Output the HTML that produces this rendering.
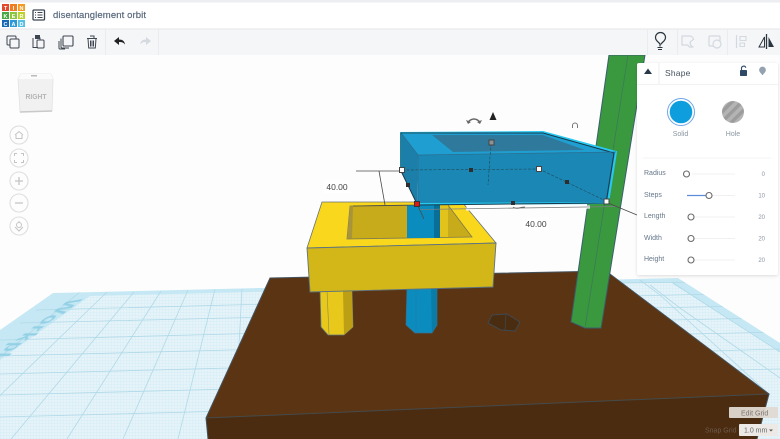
<!DOCTYPE html>
<html><head><meta charset="utf-8"><title>disentanglement orbit</title>
<style>
html,body{margin:0;padding:0;width:780px;height:439px;overflow:hidden;background:#fdfdfd}
svg{display:block}
text{font-family:"Liberation Sans",sans-serif}
</style></head><body>
<svg xmlns="http://www.w3.org/2000/svg" width="780" height="439" viewBox="0 0 780 439">
<defs>
<pattern id="fine" width="3" height="3" patternUnits="userSpaceOnUse"><rect width="3" height="3" fill="#e6f4f9"/><path d="M0 .5H3M.5 0V3" stroke="#d6ecf5" stroke-width=".5"/></pattern>
<pattern id="st" width="7" height="7" patternUnits="userSpaceOnUse" patternTransform="rotate(-45)"><rect width="7" height="7" fill="#b4b4b4"/><rect width="7" height="3.4" fill="#9c9c9c"/></pattern>
<filter id="sh" x="-5%" y="-5%" width="110%" height="110%"><feDropShadow dx="0" dy="1" stdDeviation="1.5" flood-color="#000" flood-opacity=".13"/></filter>
<filter id="b"><feGaussianBlur stdDeviation=".4"/></filter>
<clipPath id="wp"><polygon points="53,293 678,278 780,343 780,439 0,439 0,330"/></clipPath>
</defs>
<rect width="780" height="439" fill="#fdfdfd"/>

<!-- workplane -->
<polygon points="53,293 678,278 780,343 780,439 0,439 0,330" fill="url(#fine)"/>
<g clip-path="url(#wp)">
<polygon points="53,293 678,278 780,343 780,352 670,282 90,296 0,360 0,330" fill="#c6e8f4"/>
<g stroke="#b0d9e8" stroke-width=".8" fill="none">
<path d="M20,323L270,317M0,340L270,333M0,356L270,349M0,374L270,367M0,395L270,388M0,417L270,410M36,310L270,304"/>
<path d="M80,292L-101,439M107,292L-45,439M134,292L11,439M161,291L67,439M188,290L123,439M215,289L178,439M242,289L234,439"/>
<path d="M620,283L700,282M630,296L720,294M650,308L745,306M670,320L770,318M690,334L780,332M710,351L780,349M735,370L780,369"/>
<path d="M650,285L680,308L743,352L780,378M673,283L710,307L780,352M640,280L660,295L770,395"/>
</g>
<text transform="matrix(-1.05,.8,-.9,0,70,299)" font-size="20" font-weight="bold" letter-spacing="1" fill="#93d0e5" filter="url(#b)">Workplane</text>
</g>

<!-- brown base -->
<polygon points="270,278 606,271 769,394 206,418" fill="#5b3513"/>
<polygon points="206,418 769,394 757,439 208,439" fill="#4b2c10"/>
<path d="M206,418L769,394" stroke="#444a4c" stroke-width="1" fill="none"/>
<path d="M208,439L206,418L270,278L606,271L769,394L757,439" stroke="#44525e" stroke-width="1" fill="none"/>

<!-- hex hole -->
<polygon points="488,323 492,315 507,314 520,322 515,331 501,330" fill="#4a2c10" stroke="#3f4a55" stroke-width=".9"/>
<path d="M506,315L505,330" stroke="#3f4a55" stroke-width=".7"/>

<!-- green bar -->
<polygon points="609,55 645,55 601,328 585,328 571,322" fill="#3a993f" stroke="#3b5f6e" stroke-width="1"/>
<path d="M628,55L585,328" stroke="#3a7a55" stroke-width=".8"/>

<!-- blue pillar lower -->
<polygon points="407,285 437,285 437,325 432,333 415,333 406,325" fill="#0b8cbe" stroke="#3a6f8c" stroke-width=".7"/>
<polygon points="431,285 437,285 437,325 432,333" fill="#0a7ca8"/>
<path d="M416,288V333" stroke="#2c79a0" stroke-width=".6"/>

<!-- yellow pillar -->
<polygon points="320,290 352,290 353,327 344,335 328,335 321,327" fill="#e8c81b" stroke="#5d7380" stroke-width=".8"/>
<polygon points="343,290 352,290 353,327 344,335" fill="#bc9f14"/>
<path d="M327,290L329,335" stroke="#8c8a50" stroke-width=".6"/>

<!-- yellow block -->
<polygon points="322,202 462,202 496,243 307,248" fill="#f9d71c" stroke="#66727a" stroke-width=".8"/>
<polygon points="350,206 448,205 472,237 347,239" fill="#c8ab1a" stroke="#7c7a50" stroke-width=".8"/>
<polygon points="350,206 347,239 352,238 353,207" fill="#a8943a"/>
<polygon points="407,205 440,205 440,238 407,238" fill="#0b8cbe"/>
<polygon points="434,205 440,205 440,238 434,238" fill="#0a6f98"/>
<polygon points="440,205 448,205 448,237 440,237" fill="#e2c31c"/>
<polygon points="307,248 496,243 493,287 310,292" fill="#d3b618" stroke="#5d7380" stroke-width=".9"/>

<!-- white line under box -->
<path d="M466,209L590,207" stroke="#fff" stroke-width="3"/>
<path d="M420,209.500L618,206.500" stroke="#7e8080" stroke-width=".8"/>

<!-- blue box -->
<polygon points="401,133 418,155 417,204 401,171" fill="#1c7fa9"/>
<polygon points="401,133 543,132 616,152 418,155" fill="#1f9fd1"/>
<polygon points="432,135 543,135 585,150 453,152" fill="#2f7a9c"/>
<polygon points="418,155 616,152 608,203 417,204" fill="#1b87b4"/>
<path d="M401,171V133L543,132L616,152L608,203L417,204" fill="none" stroke="#28c8f0" stroke-width="2"/>
<path d="M401,171V133L543,133L614,153L606,203L417,205" fill="none" stroke="#17384a" stroke-width="1"/>
<path d="M402,134L418,155L616,152M418,155V204" fill="none" stroke="#2a6f90" stroke-width=".7"/>
<path d="M401,171L417,204" stroke="#17384a" stroke-width="1"/>

<!-- dashed / dims -->
<path d="M402,170L539,169M491,143L488,185M539,169L606,201" stroke="#22495c" stroke-width=".6" stroke-dasharray="3 1.500" fill="none"/>
<path d="M356,171L401,171M379,171L385,205M353,206L417,205M417,204L424,219M608,203L637,215" stroke="#4a4a4a" stroke-width=".8" fill="none"/>
<path d="M513,207q3,2 6,1t6,-1" stroke="#555" stroke-width=".7" fill="none"/>

<!-- handles -->
<g fill="#2e2e2e"><rect x="469" y="168" width="4" height="4"/><rect x="406" y="183" width="4" height="4"/><rect x="565" y="180" width="4" height="4"/><rect x="511" y="201" width="4" height="4"/></g>
<g fill="#fff" stroke="#444" stroke-width="1"><rect x="399.500" y="167.500" width="5" height="5"/><rect x="536.500" y="166.500" width="5" height="5"/><rect x="604" y="199" width="5" height="5"/></g>
<rect x="489" y="140" width="5" height="5" fill="#8b9396" stroke="#444"/>
<rect x="414.500" y="201.500" width="5" height="5" fill="#e3170f" stroke="#333"/>

<!-- dim labels -->
<rect x="324" y="180" width="26" height="13" fill="#fff"/>
<text x="337" y="190" font-size="8.500" fill="#444" text-anchor="middle">40.00</text>
<rect x="523" y="217" width="26" height="13" fill="#fff"/>
<text x="536" y="227" font-size="8.500" fill="#444" text-anchor="middle">40.00</text>

<!-- rotate handles -->
<path d="M468,122q6,-6 12,0" fill="none" stroke="#666" stroke-width="1.300"/>
<path d="M466,120l2,4 3,-2zM482,120l-2,4 -3,-2z" fill="#666"/>
<polygon points="493,112 496.500,120 489.500,120" fill="#222"/>
<path d="M572.500,128v-2.500a2.500,2.500 0 0 1 5,0v2.500" fill="none" stroke="#777" stroke-width="1"/>

<!-- header -->
<rect width="780" height="29" fill="#fff"/>
<rect width="780" height="2.500" fill="#eceef1"/>
<rect y="29" width="780" height="26" fill="#f5f6f8"/>
<path d="M0,29H780" stroke="#e3e5e9" stroke-width="1"/>
<path d="M105.500,29V55M158.500,29V55M647.500,29V55M677.500,29V55M727.500,29V55" stroke="#eaecef"/>

<!-- logo -->
<g font-size="5.500" font-weight="bold" fill="#fff" text-anchor="middle">
<rect x="2" y="4" width="7" height="7" fill="#e5492d"/><text x="5.500" y="9.800">T</text>
<rect x="10" y="4" width="7" height="7" fill="#ef7d22"/><text x="13.500" y="9.800">I</text>
<rect x="18" y="4" width="7" height="7" fill="#f59b24"/><text x="21.500" y="9.800">N</text>
<rect x="2" y="12" width="7" height="7" fill="#4aa843"/><text x="5.500" y="17.800">K</text>
<rect x="10" y="12" width="7" height="7" fill="#8cc63f"/><text x="13.500" y="17.800">E</text>
<rect x="18" y="12" width="7" height="7" fill="#bcd231"/><text x="21.500" y="17.800">R</text>
<rect x="2" y="20" width="7" height="7" fill="#1668b5"/><text x="5.500" y="25.800">C</text>
<rect x="10" y="20" width="7" height="7" fill="#2c98d6"/><text x="13.500" y="25.800">A</text>
<rect x="18" y="20" width="7" height="7" fill="#55bfe6"/><text x="21.500" y="25.800">D</text>
</g>
<!-- list icon -->
<rect x="33" y="10" width="11.500" height="10" rx="1" fill="none" stroke="#3c4650" stroke-width="1.300"/>
<path d="M35,12.500h1M37.500,12.500h5M35,15h1M37.500,15h5M35,17.500h1M37.500,17.500h5" stroke="#3c4650" stroke-width="1.100"/>
<text x="53" y="18" font-size="9.500" fill="#5a6a7e" stroke="#5a6a7e" stroke-width=".2" textLength="93" lengthAdjust="spacing">disentanglement orbit</text>

<!-- toolbar icons -->
<g fill="none" stroke="#3e4750" stroke-width="1">
<rect x="7" y="36" width="9" height="9" rx="1"/><rect x="10" y="39" width="9" height="9" rx="1" fill="#f5f6f8"/>
<path d="M33,38v9.500h5M36,38h4v2"/><rect x="37" y="40" width="7" height="8" rx="1"/><rect x="35.500" y="35.500" width="4" height="3" fill="#3e4750"/>
<rect x="63" y="36" width="10" height="10" rx="1" stroke-width="1.100"/>
<path d="M61,38.500v8.500a1,1 0 0 0 1,1h7M59,41v7a1,1 0 0 0 1,1h5"/>
<path d="M87,38.500h10M88,38.500l.7,9.500h6.600l.7,-9.500M90,36h4v2.500M90.500,40.500v6M92,40.500v6M93.500,40.500v6"/>
</g>
<path d="M114,41l5,-4v2.500c3.500,0 5.500,1.500 6,5c-1.500,-2 -3,-2.500 -6,-2.500v3z" fill="#222"/>
<path d="M151,41l-5,-4v2.500c-3.500,0 -5.500,1.500 -6,5c1.500,-2 3,-2.500 6,-2.500v3z" fill="#d4dae0"/>

<!-- right toolbar -->
<g fill="none">
<path d="M660.500,47v-2c0,-2 -4.500,-3 -4.500,-7a5,5 0 0 1 10,0c0,4 -4.500,5 -4.500,7" stroke="#2c3640" stroke-width="1.200" transform="translate(-.500,-.500)"/>
<path d="M657.500,47.500h5M658,49.500h4" stroke="#2c3640" stroke-width="1.100"/>
<path d="M682,36h8a4,4 0 0 1 3.500,3.500l-3,2a4,4 0 0 0 3,5.500h-4l-2,-2h-5.500z" stroke="#d3d9df" stroke-width="1.200"/>
<rect x="709" y="36" width="11" height="10" rx="1" stroke="#d3d9df" stroke-width="1.200"/><circle cx="717" cy="44" r="4" stroke="#d3d9df" stroke-width="1.200" fill="#f5f6f8"/>
<path d="M736.500,35V48" stroke="#d3d9df" stroke-width="1.200"/>
<path d="M740,36.500h6v4h-6zM740,43h4.500v3.500h-4.500z" stroke="#d3d9df" stroke-width="1.100"/>
<path d="M766.500,34V49" stroke="#2c3640" stroke-width="1.300"/>
<path d="M764.500,37l-5.500,10h5.500z" stroke="#2c3640" stroke-width="1"/>
</g>
<path d="M768.500,37l5.500,10h-5.500z" fill="#2c3640"/>

<!-- view cube -->
<polygon points="18,79 21,74 51,74 53,79 52,111 20,112" fill="#f1f1f1" stroke="#e2e2e2" stroke-width=".8"/>
<polygon points="18,79 21,74 51,74 53,79" fill="#fbfbfb"/>
<path d="M20,112L52,111" stroke="#c9c9c9" stroke-width="1.500"/>
<text x="36" y="99" font-size="7.500" font-weight="bold" fill="#b5b5b5" text-anchor="middle" textLength="21" lengthAdjust="spacingAndGlyphs">RIGHT</text>
<rect x="31" y="75" width="6" height="1.500" fill="#bbb"/>

<!-- left controls -->
<g fill="#fdfdfd" stroke="#dedede" stroke-width="1.100">
<circle cx="19" cy="135" r="9"/><circle cx="19" cy="158" r="9"/><circle cx="19" cy="181" r="9"/><circle cx="19" cy="203" r="9"/><circle cx="19" cy="226" r="9"/>
</g>
<g fill="none" stroke="#c4c4c4" stroke-width="1">
<path d="M15,135l4,-3.500 4,3.500M16,135v3.500h6V135"/>
<path d="M14.500,156v-2.500h2.500M21,153.500h2.500V156M14.500,160v2.500h2.500M21,162.500h2.500V160"/>
<path d="M15,181h8M19,177v8M15,203h8" stroke-width="1.300"/>
<circle cx="19" cy="225" r="2.500"/><path d="M15,227l4,4 4,-4M19,221v2"/>
</g>

<!-- panel -->
<rect x="637" y="63" width="141" height="212" rx="2" fill="#fff" filter="url(#sh)"/>
<rect x="658" y="63" width="2" height="21" fill="#f5f6f8"/>
<rect x="637" y="84" width="141" height="1" fill="#f1f2f4"/>
<polygon points="648,68.500 652,74 644,74" fill="#28384a"/>
<text x="665" y="76" font-size="8.500" fill="#45525f" letter-spacing=".2">Shape</text>
<rect x="740" y="70" width="7" height="6" rx=".8" fill="#2f4a66"/>
<path d="M741.500,70v-1.500a2.200,2.200 0 0 1 4.300,-.8" fill="none" stroke="#2f4a66" stroke-width="1.100"/>
<path d="M762.500,75c0,-1.500 -3,-2.500 -3,-5a3,3 0 0 1 6,0c0,2.500 -3,3.500 -3,5z" fill="#93a2ae" stroke="#93a2ae" stroke-width=".8"/>
<circle cx="681" cy="112" r="13.500" fill="#fff" stroke="#6ea6ea" stroke-width="1"/>
<circle cx="681" cy="112" r="11.300" fill="#0f9edd"/>
<circle cx="733" cy="112" r="11" fill="url(#st)"/>
<text x="680.500" y="136" font-size="7" fill="#8a96a1" text-anchor="middle">Solid</text>
<text x="733" y="136" font-size="7" fill="#8a96a1" text-anchor="middle">Hole</text>
<path d="M643,158H771" stroke="#f3f3f3"/>
<g font-size="7" fill="#66778a">
<text x="644" y="175">Radius</text><text x="644" y="197">Steps</text><text x="644" y="218">Length</text><text x="644" y="240">Width</text><text x="644" y="261">Height</text>
</g>
<g stroke="#f0f0f0" stroke-width="1"><path d="M692,174H735M692,195.500H735M692,217H735M692,238.500H735M692,260H735"/></g>
<path d="M687,195.500H707" stroke="#5b8fdc" stroke-width="1.300"/>
<g fill="#fff" stroke="#6a6a6a" stroke-width="1.100">
<circle cx="686.500" cy="174" r="3"/><circle cx="709" cy="195.500" r="3"/><circle cx="691" cy="217" r="3"/><circle cx="691" cy="238.500" r="3"/><circle cx="691" cy="260" r="3"/>
</g>
<g font-size="6" fill="#8a96a1" text-anchor="end">
<text x="765" y="176">0</text><text x="765" y="197.500">10</text><text x="765" y="219">20</text><text x="765" y="240.500">20</text><text x="765" y="262">20</text>
</g>

<!-- grid controls -->
<rect x="729" y="407" width="49" height="11" rx="1" fill="#e0d9d3" opacity=".95"/>
<text x="741" y="415.500" font-size="7" fill="#7b7570">Edit Grid</text>
<text x="705" y="432.500" font-size="7" fill="#6d5a4b">Snap Grid</text>
<rect x="739" y="424" width="39" height="12" rx="1" fill="#ece9e6"/>
<text x="744" y="432.500" font-size="7" fill="#6a6a6a">1.0 mm</text>
<polygon points="769,429.500 773,429.500 771,431.500" fill="#555"/>
</svg>
</body></html>
